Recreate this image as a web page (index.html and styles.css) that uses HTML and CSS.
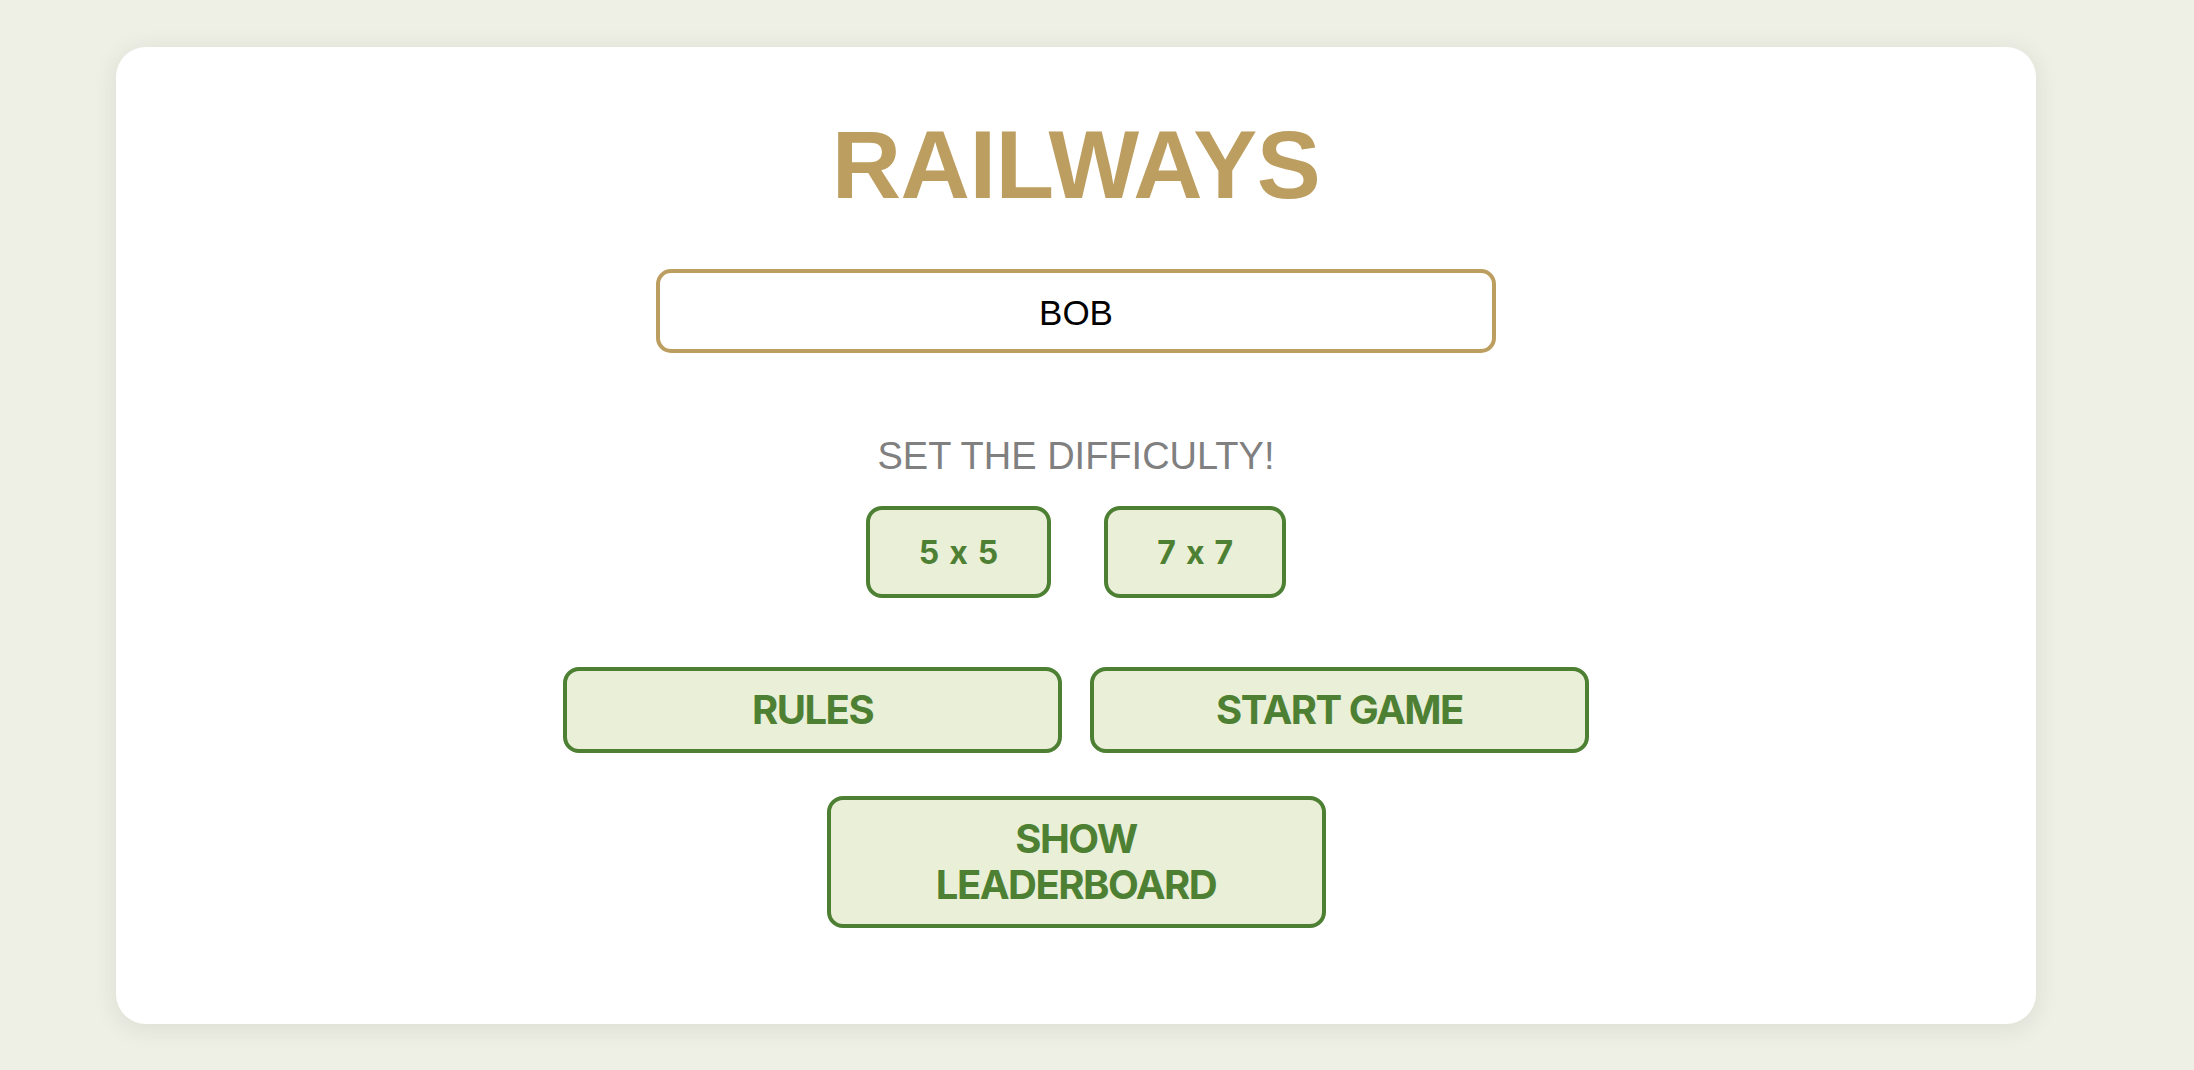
FILE: index.html
```html
<!DOCTYPE html>
<html lang="en">
<head>
<meta charset="utf-8">
<title>Railways</title>
<link rel="stylesheet" href="styles.css">
</head>
<body>
  <main class="card">
    <h1 class="title">RAILWAYS</h1>
    <input class="name-input" type="text" value="BOB" aria-label="Player name">
    <p class="subtitle">SET THE DIFFICULTY!</p>
    <div class="diff-row">
      <button class="btn btn-diff" type="button">5 x 5</button>
      <button class="btn btn-diff" type="button">7 x 7</button>
    </div>
    <div class="action-row">
      <button class="btn btn-big" type="button">RULES</button>
      <button class="btn btn-big" type="button">START GAME</button>
    </div>
    <div class="action-row action-row-last">
      <button class="btn btn-big" type="button">SHOW LEADERBOARD</button>
    </div>
  </main>
</body>
</html>
```

FILE: styles.css
```css
html, body {
  margin: 0;
  padding: 0;
}

body {
  background: #eeefe5;
  font-family: "Liberation Sans", Arial, sans-serif;
  min-height: 1070px;
  padding-top: 47px;
  padding-left: 116px;
  box-sizing: border-box;
}

.card {
  width: 1920px;
  box-sizing: border-box;
  background: #ffffff;
  border-radius: 30px;
  box-shadow: 0 4px 24px rgba(60, 60, 40, 0.10);
  padding: 62px 0 96px;
  display: flex;
  flex-direction: column;
  align-items: center;
}

.title {
  margin: 0;
  font-family: "Liberation Sans", Arial, sans-serif;
  font-weight: 700;
  font-size: 96px;
  line-height: 112px;
  letter-spacing: -0.5px;
  color: #bd9e61;
  text-align: center;
}

.name-input {
  display: block;
  margin: 48px 0 0;
  width: 840px;
  height: 84px;
  box-sizing: border-box;
  border: 4px solid #bd9e61;
  border-radius: 15px;
  padding: 4px 0 0;
  background: #ffffff;
  font-family: "Liberation Sans", Arial, sans-serif;
  font-size: 35px;
  color: #000000;
  text-align: center;
  outline: none;
}

.subtitle {
  margin: 81px 0 0;
  font-family: "Liberation Sans", Arial, sans-serif;
  font-size: 38px;
  line-height: 44px;
  color: #808080;
  text-align: center;
}

.diff-row {
  display: flex;
  justify-content: center;
  gap: 53px;
  margin-top: 28px;
}

.btn {
  box-sizing: border-box;
  border: 4px solid #4e8034;
  background: #eaefd7;
  color: #4e8034;
  font-family: Inter, "Liberation Sans", sans-serif;
  font-weight: 700;
  font-feature-settings: "calt" 0;
  border-radius: 16px;
  text-align: center;
  cursor: pointer;
}

.btn-diff {
  font-size: 32px;
  line-height: 37px;
  letter-spacing: 1.2px;
  padding: 24px 48px 23px 49px;
}

.action-row {
  display: flex;
  justify-content: center;
  gap: 28px;
  margin-top: 69px;
}

.action-row-last {
  margin-top: 43px;
}

.btn-big {
  width: 499px;
  font-size: 40px;
  line-height: 46px;
  letter-spacing: -1.5px;
  padding: 16px 70px;
}
```
